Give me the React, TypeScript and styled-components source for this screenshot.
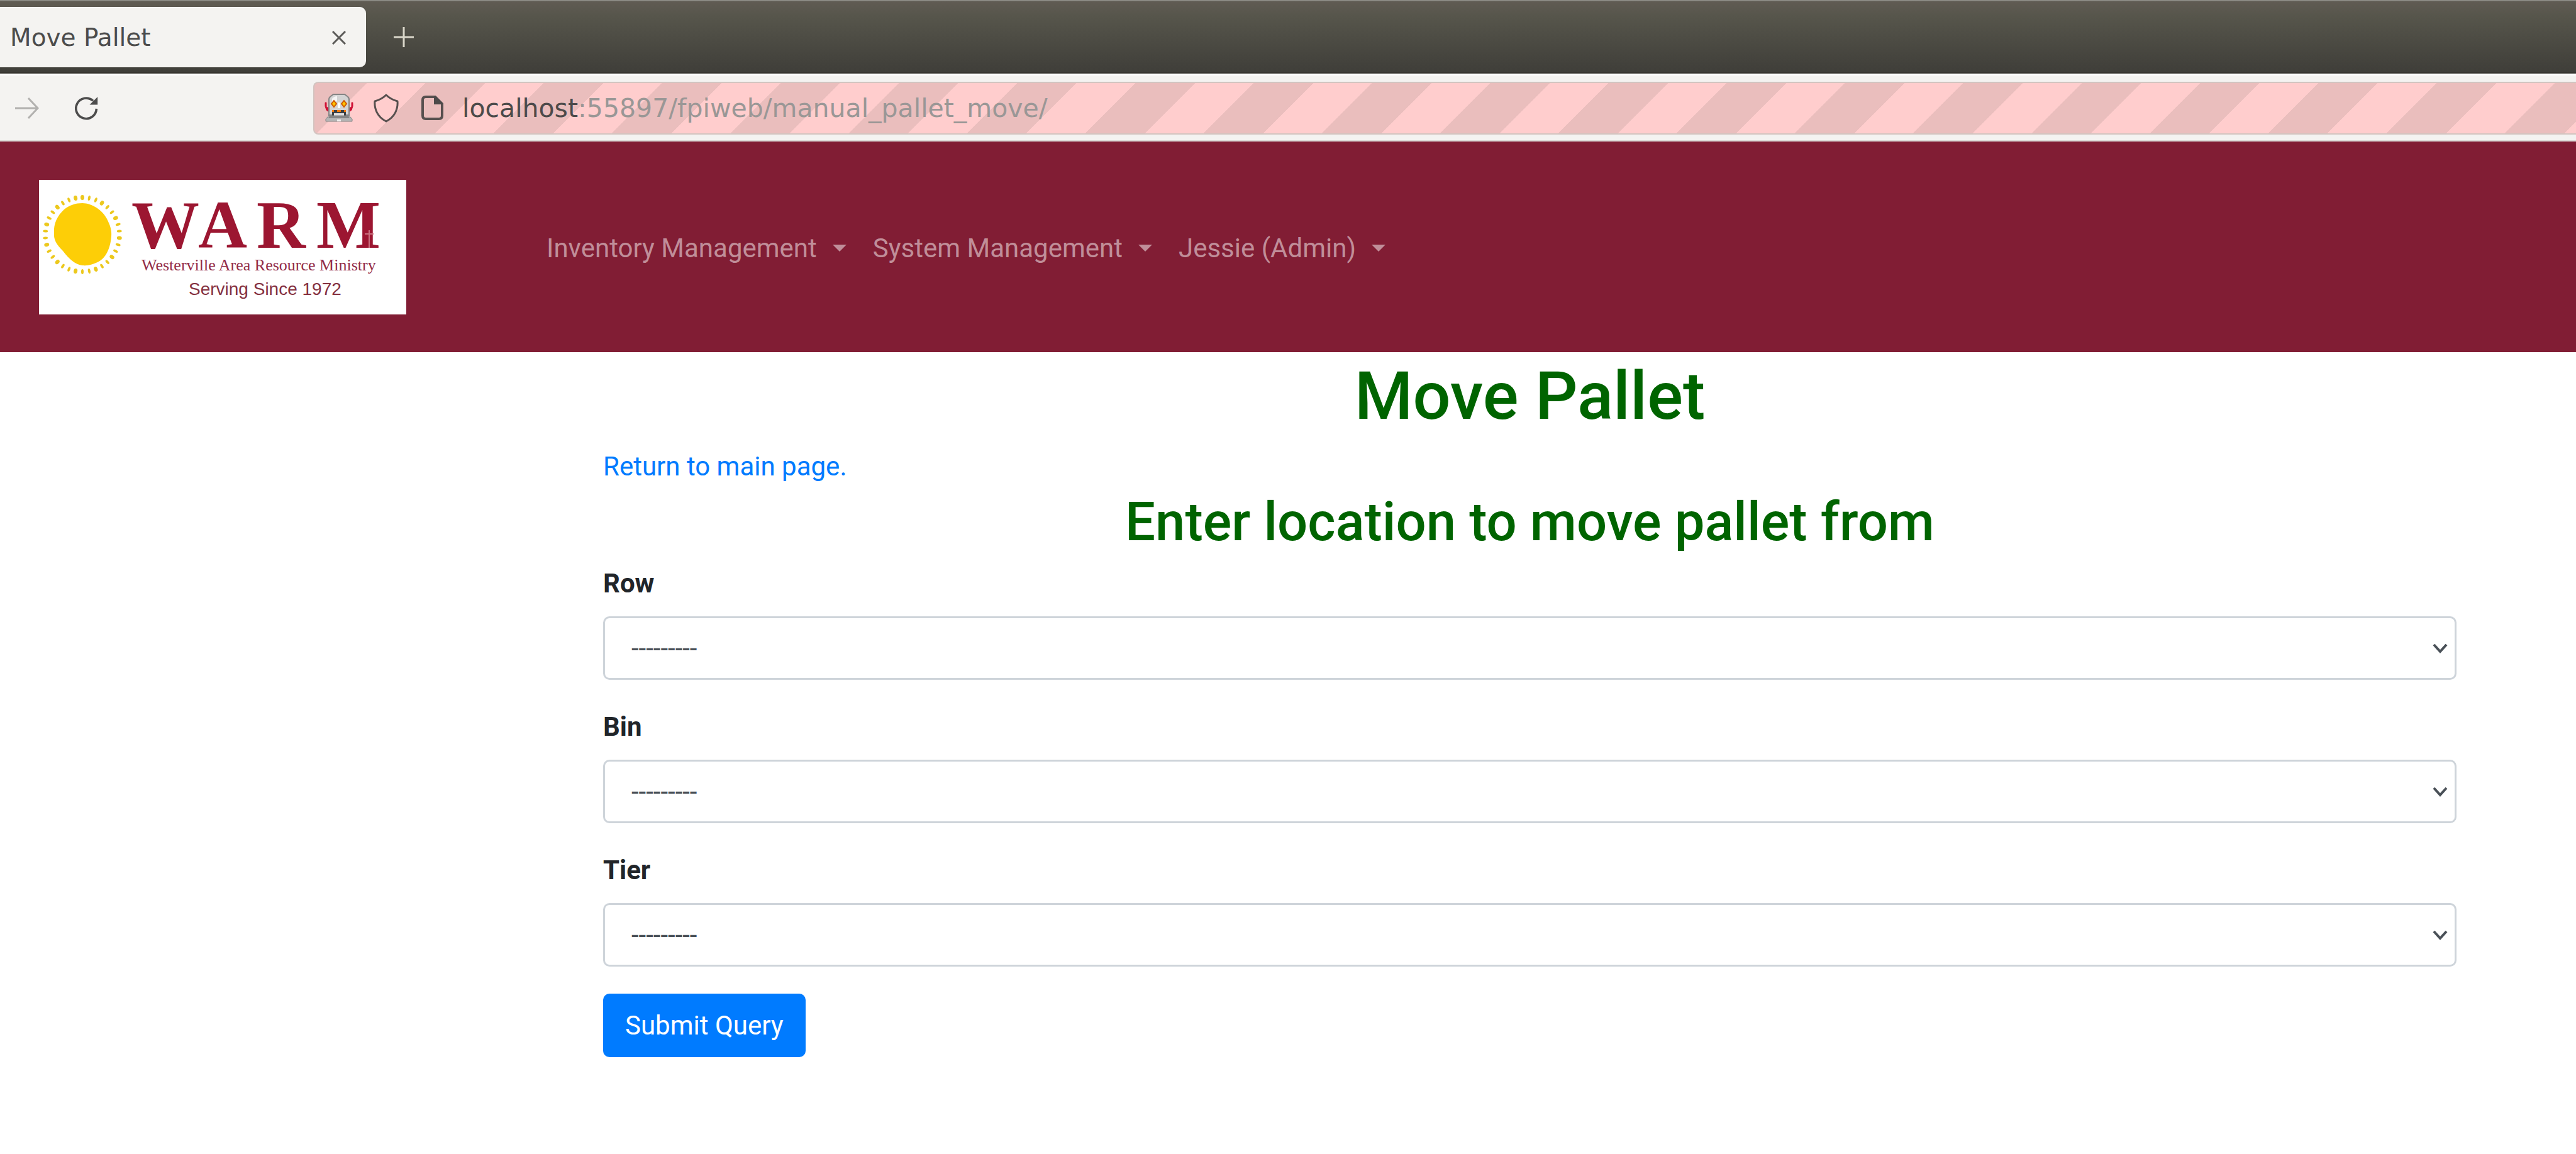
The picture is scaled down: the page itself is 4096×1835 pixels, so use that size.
import React from 'react';
import styled, { createGlobalStyle } from 'styled-components';

const GlobalStyle = createGlobalStyle`
  *, *::before, *::after { box-sizing: border-box; }
  body {
    margin: 0;
    background: #fff;
    color: #212529;
    font-family: Roboto, 'Liberation Sans', sans-serif;
    font-size: 42px;
    line-height: 64px;
  }
  button, input, select { font: inherit; }
`;

const TitleBar = styled.div`
  display: flex;
  align-items: flex-start;
  height: 117px;
  padding-top: 9px;
  border-top: 2px solid #8b8a84;
  border-bottom: 2px solid #34322d;
  background: linear-gradient(#605b53, #56554b 22%, #3f3e39);
  font-family: 'DejaVu Sans', sans-serif;
`;

const Tab = styled.div`
  display: flex;
  align-items: center;
  justify-content: space-between;
  width: 582px;
  height: 96px;
  padding: 0 24px 0 16px;
  border-radius: 0 10px 10px 0;
  border-top: 2px solid #fff;
  background: #f4f3f1;
  color: #4c4c4c;
  font-size: 39px;
`;

const IconButton = styled.button`
  display: flex;
  align-items: center;
  justify-content: center;
  flex: none;
  width: 38px;
  height: 96px;
  margin: 0;
  padding: 0;
  border: 0;
  background: none;
`;

const NewTabButton = styled(IconButton)`
  margin-left: 41px;
`;

const ToolBar = styled.div`
  display: flex;
  align-items: center;
  height: 108px;
  padding-left: 24px;
  border-top: 3px solid #fff;
  border-bottom: 2px solid #dcdcd8;
  background: #f4f3f1;
  font-family: 'DejaVu Sans', sans-serif;
`;

const ReloadButton = styled(IconButton)`
  margin-left: 57px;
`;

const AddressBar = styled.div`
  display: flex;
  align-items: center;
  flex: 1;
  height: 84px;
  margin-left: 341px;
  padding-left: 16px;
  border: 2px solid #d3c4c0;
  border-right: 0;
  border-radius: 8px 0 0 8px;
  background: repeating-linear-gradient(
    135deg,
    #eabebd 0 59px,
    #ffcdcd 59px 125px,
    #eabebd 125px 133px
  );
  font-size: 41px;
`;

const AddressIcons = styled.div`
  display: flex;
  align-items: center;
  gap: 30px;
  margin-right: 30px;
`;

const Host = styled.label`
  color: #4c4a4a;
`;

const AddressInput = styled.input`
  flex: 1;
  min-width: 0;
  padding: 0;
  border: 0;
  outline: 0;
  background: transparent;
  color: #9a9796;
`;

const NavBar = styled.nav`
  display: flex;
  align-items: center;
  padding: 61px 62px 60px;
  background: #811d34;
`;

const Brand = styled.a`
  display: flex;
  width: 584px;
  height: 214px;
  margin-right: 202px;
  background: #fff;
`;

const NavLink = styled.button`
  display: flex;
  align-items: center;
  padding: 23px 21px 20px;
  border: 0;
  background: none;
  color: #c08e99;

  &::after {
    content: '';
    margin-left: 25px;
    border-top: 11px solid;
    border-right: 11px solid transparent;
    border-left: 11px solid transparent;
  }
`;

const Main = styled.main`
  padding: 6px 190px 154px 959px;
`;

const Title = styled.h1`
  margin: 0 0 16px;
  color: #006400;
  font-size: 106px;
  font-weight: 500;
  line-height: 128px;
  text-align: center;
`;

const Subtitle = styled.h2`
  margin: 5px 0 15px;
  color: #006400;
  font-size: 85px;
  font-weight: 500;
  line-height: 102px;
  text-align: center;
`;

const ReturnLink = styled.a`
  display: table;
  color: #007bff;
  text-decoration: none;
`;

const Field = styled.div`
  margin-bottom: 43px;
`;

const FieldLabel = styled.label`
  display: block;
  margin-bottom: 20px;
  font-weight: 700;
`;

const SelectBox = styled.div`
  position: relative;
`;

const Select = styled.select`
  display: block;
  appearance: none;
  width: 100%;
  height: 101px;
  padding: 0 64px 0 42px;
  border: 3px solid #ced4da;
  border-radius: 10px;
  background: #fff;
  color: #495057;
`;

const Chevron = styled.svg`
  position: absolute;
  top: 42px;
  right: 14px;
  pointer-events: none;
`;

const SubmitButton = styled.button`
  display: block;
  height: 101px;
  padding: 0 35px;
  border: 0;
  border-radius: 10px;
  background: #007bff;
  color: #fff;
`;

const menus = ['Inventory Management', 'System Management', 'Jessie (Admin)'];
const fields = ['Row', 'Bin', 'Tier'];

const RobotIcon = () => (
  <svg width="46" height="45" viewBox="0 0 46 45" aria-hidden="true">
    <path d="M1 14h2v7l4 2v6l-4-3-2-6zM45 14h-2v7l-4 2v6l4-3 2-6z" fill="#cf1034" stroke="#cf1034" />
    <path d="M7 34V9q0-3 3-5l4-3h18l4 3q3 2 3 5v25z" fill="#d4d4d4" stroke="#858585" strokeWidth="2" />
    <path d="M12 8q3-4 8-4v8q-6 2-8 2z" fill="#f5f5f5" />
    <path d="M21 14h4v9h-4z" fill="#fff" />
    <path d="M15 11l4 5-4 5-4-5zM31 11l4 5-4 5-4-5z" fill="#ffc400" stroke="#cf5b00" strokeWidth="2" />
    <path d="M12 26h22v9H12z" fill="#3f4244" />
    <path d="M12 26h3v3h-3zM20 26h6v3h-6zM31 26h3v3h-3z" fill="#f57900" />
    <path d="M15 31h16v4H15z" fill="#dedede" />
    <path d="M7 35h32l5 5v4H2v-4z" fill="#b5b5b5" stroke="#858585" strokeWidth="1" />
    <path d="M8 35h30l2 4H6z" fill="#858585" />
    <path d="M20 41h6v3h-6z" fill="#f0f0f0" />
  </svg>
);

const ShieldIcon = () => (
  <svg width="48" height="46" viewBox="0 0 48 46" fill="none" stroke="#57504f" strokeWidth="3" strokeLinejoin="round" aria-hidden="true">
    <path d="M22 2C18 6 11 10 4 12c-1 12 4 25 18 32C36 37 41 24 40 12 33 10 26 6 22 2z" />
  </svg>
);

const PageIcon = () => (
  <svg width="35" height="39" viewBox="0 0 35 39" aria-hidden="true">
    <path d="M7 2h15l11 11v19q0 5-5 5H7q-5 0-5-5V7q0-5 5-5z" fill="none" stroke="#57504f" strokeWidth="4" />
    <path d="M20 1h3l11 11v2H20z" fill="#4c4a4a" />
  </svg>
);

const rays = Array.from({ length: 34 }, (_, i) => (i * 360) / 34);

const Logo = () => (
  <svg width="584" height="214" viewBox="0 0 584 214" role="img" aria-label="WARM">
    <path
      d="M69 37C84 37 101 48 108 62C113 72 116 80 115 90C114 104 109 120 98 128C90 133 80 137 69 136C58 135 48 126 38 113C27 102 23 94 24 84C23 70 29 57 40 47C49 40 58 37 69 37z"
      fill="#fdce07"
    />
    {rays.map((angle, i) => (
      <ellipse
        key={angle}
        cx="69"
        cy="28"
        rx={i % 3 ? 2 : 3}
        ry="4"
        fill="#ecc81d"
        transform={`rotate(${angle} 69 87)`}
      />
    ))}
    <g fill="#9c1631" fontFamily="'Liberation Serif', serif" fontWeight="700" fontSize="108">
      <text x="147" y="108">W</text>
      <text x="253" y="108">A</text>
      <text x="346" y="108">R</text>
      <text x="441" y="108">M</text>
    </g>
    <path d="M525 80v28M518 86h14" stroke="#c9707f" strokeWidth="2" />
    <text x="163" y="144" fill="#932c47" fontFamily="'Liberation Serif', serif" fontSize="26">
      Westerville Area Resource Ministry
    </text>
    <text x="238" y="183" fill="#84303f" fontFamily="'Liberation Sans', sans-serif" fontSize="28">
      Serving Since 1972
    </text>
  </svg>
);

export default function App() {
  return (
    <>
      <GlobalStyle />
      <header>
        <TitleBar>
          <Tab>
            <span>Move Pallet</span>
            <IconButton aria-label="Close tab">
              <svg width="22" height="22" viewBox="0 0 22 22" stroke="#5c5b59" strokeWidth="3">
                <path d="M1 1l20 20M21 1L1 21" />
              </svg>
            </IconButton>
          </Tab>
          <NewTabButton aria-label="New tab">
            <svg width="34" height="34" viewBox="0 0 34 34" stroke="#d9d6c9" strokeWidth="3">
              <path d="M17 1v32M1 17h32" />
            </svg>
          </NewTabButton>
        </TitleBar>
        <ToolBar>
          <IconButton aria-label="Forward">
            <svg width="38" height="34" viewBox="0 0 38 34" fill="none" stroke="#b2b1af" strokeWidth="3">
              <path d="M0 17h36M21 1l15 16-15 16" />
            </svg>
          </IconButton>
          <ReloadButton aria-label="Reload">
            <svg width="42" height="40" viewBox="0 0 42 40">
              <path d="M38 21A18 18 0 1 1 32 7" fill="none" stroke="#4c4c4c" strokeWidth="4" />
              <path d="M40 0v14H26z" fill="#4c4c4c" />
            </svg>
          </ReloadButton>
          <AddressBar>
            <AddressIcons>
              <RobotIcon />
              <ShieldIcon />
              <PageIcon />
            </AddressIcons>
            <Host htmlFor="address">localhost</Host>
            <AddressInput id="address" defaultValue=":55897/fpiweb/manual_pallet_move/" spellCheck={false} />
          </AddressBar>
        </ToolBar>
      </header>
      <NavBar>
        <Brand href="#">
          <Logo />
        </Brand>
        {menus.map((menu) => (
          <NavLink key={menu}>{menu}</NavLink>
        ))}
      </NavBar>
      <Main>
        <Title>Move Pallet</Title>
        <ReturnLink href="#">Return to main page.</ReturnLink>
        <Subtitle>Enter location to move pallet from</Subtitle>
        <form>
          {fields.map((field) => (
            <Field key={field}>
              <FieldLabel htmlFor={field}>{field}</FieldLabel>
              <SelectBox>
                <Select id={field}>
                  <option>---------</option>
                </Select>
                <Chevron width="24" height="18" viewBox="0 0 24 18" fill="none" stroke="#495057" strokeWidth="4">
                  <path d="M2 3l10 11L22 3" />
                </Chevron>
              </SelectBox>
            </Field>
          ))}
          <SubmitButton type="button">Submit Query</SubmitButton>
        </form>
      </Main>
    </>
  );
}
